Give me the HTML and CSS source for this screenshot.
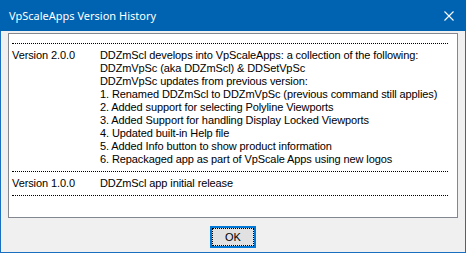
FILE: index.html
```html
<!DOCTYPE html>
<html lang="en">

<head>
    <meta charset="UTF-8" />
    <meta name="viewport" content="width=device-width, initial-scale=1.0" />
    <title>VpScaleApps Version History</title>
    <link rel="stylesheet" href="styles.css">
</head>

<body>
    <div class="window">
        <div class="titlebar">
            <span class="title">VpScaleApps Version History</span>
            <svg class="close_btn" width="10" height="10" viewBox="0 0 10 10">
                <path d="M0.5 0.5 L9.5 9.5 M9.5 0.5 L0.5 9.5" stroke="#fff" stroke-width="1.1" fill="none" />
            </svg>
        </div>
        <div class="client">
            <div class="history">
                <div class="entry">
                    <div class="version">Version 2.0.0</div>
                    <div class="notes">
                        <div>DDZmScl develops into VpScaleApps: a collection of the following:</div>
                        <div>DDZmVpSc (aka DDZmScl) &amp; DDSetVpSc</div>
                        <div>DDZmVpSc updates from previous version:</div>
                        <div>1. Renamed DDZmScl to DDZmVpSc (previous command still applies)</div>
                        <div>2. Added support for selecting Polyline Viewports</div>
                        <div>3. Added Support for handling Display Locked Viewports</div>
                        <div>4. Updated built-in Help file</div>
                        <div>5. Added Info button to show product information</div>
                        <div>6. Repackaged app as part of VpScale Apps using new logos</div>
                    </div>
                </div>
                <div class="entry last">
                    <div class="version">Version 1.0.0</div>
                    <div class="notes">
                        <div>DDZmScl app initial release</div>
                    </div>
                </div>
            </div>
            <div class="actions">
                <button class="ok_btn"><span>OK</span></button>
            </div>
        </div>
    </div>
</body>

</html>
```

FILE: styles.css
```css
body {
    margin: 0;
    background: #fff;
}

.window {
    width: 466px;
    height: 253px;
    box-sizing: border-box;
    border: 1px solid #1a6fc0;
    border-top: none;
    background: #f0f0f0;
    display: flex;
    flex-direction: column;
}

.titlebar {
    height: 31px;
    margin: 0 -1px;
    background: #0063b1;
    display: flex;
    align-items: center;
    justify-content: space-between;
    padding: 0 12px 0 9px;
}

.title {
    color: #fff;
    font-family: "Noto Sans", "Open Sans", sans-serif;
    font-size: 11px;
    padding-bottom: 1px;
}

.close_btn {
    margin-top: 1px;
}

.client {
    flex: 1;
    display: flex;
    flex-direction: column;
    align-items: center;
    padding-top: 2px;
}

.history {
    width: 450px;
    height: 185px;
    box-sizing: border-box;
    border: 1px solid #828790;
    background: #fff;
    padding: 9px 9px 0 3px;
    font-family: "Liberation Sans", Arial, sans-serif;
    font-size: 11px;
    line-height: 13px;
    letter-spacing: -0.1px;
    color: #000;
}

.entry {
    display: flex;
    border-top: 1px dotted #000;
    padding: 5px 0;
}

.entry.last {
    border-bottom: 1px dotted #000;
}

.version {
    width: 88px;
    flex-shrink: 0;
}

.notes {
    white-space: nowrap;
}

.actions {
    padding-top: 8px;
}

.ok_btn {
    width: 46px;
    height: 22px;
    padding: 0;
    box-sizing: border-box;
    border: 2px solid #0078d7;
    background: #e1e1e1;
    display: flex;
    font-family: "Liberation Sans", Arial, sans-serif;
    font-size: 11px;
    color: #000;
}

.ok_btn span {
    flex: 1;
    border: 1px dotted #000;
    display: flex;
    align-items: center;
    justify-content: center;
}
```
